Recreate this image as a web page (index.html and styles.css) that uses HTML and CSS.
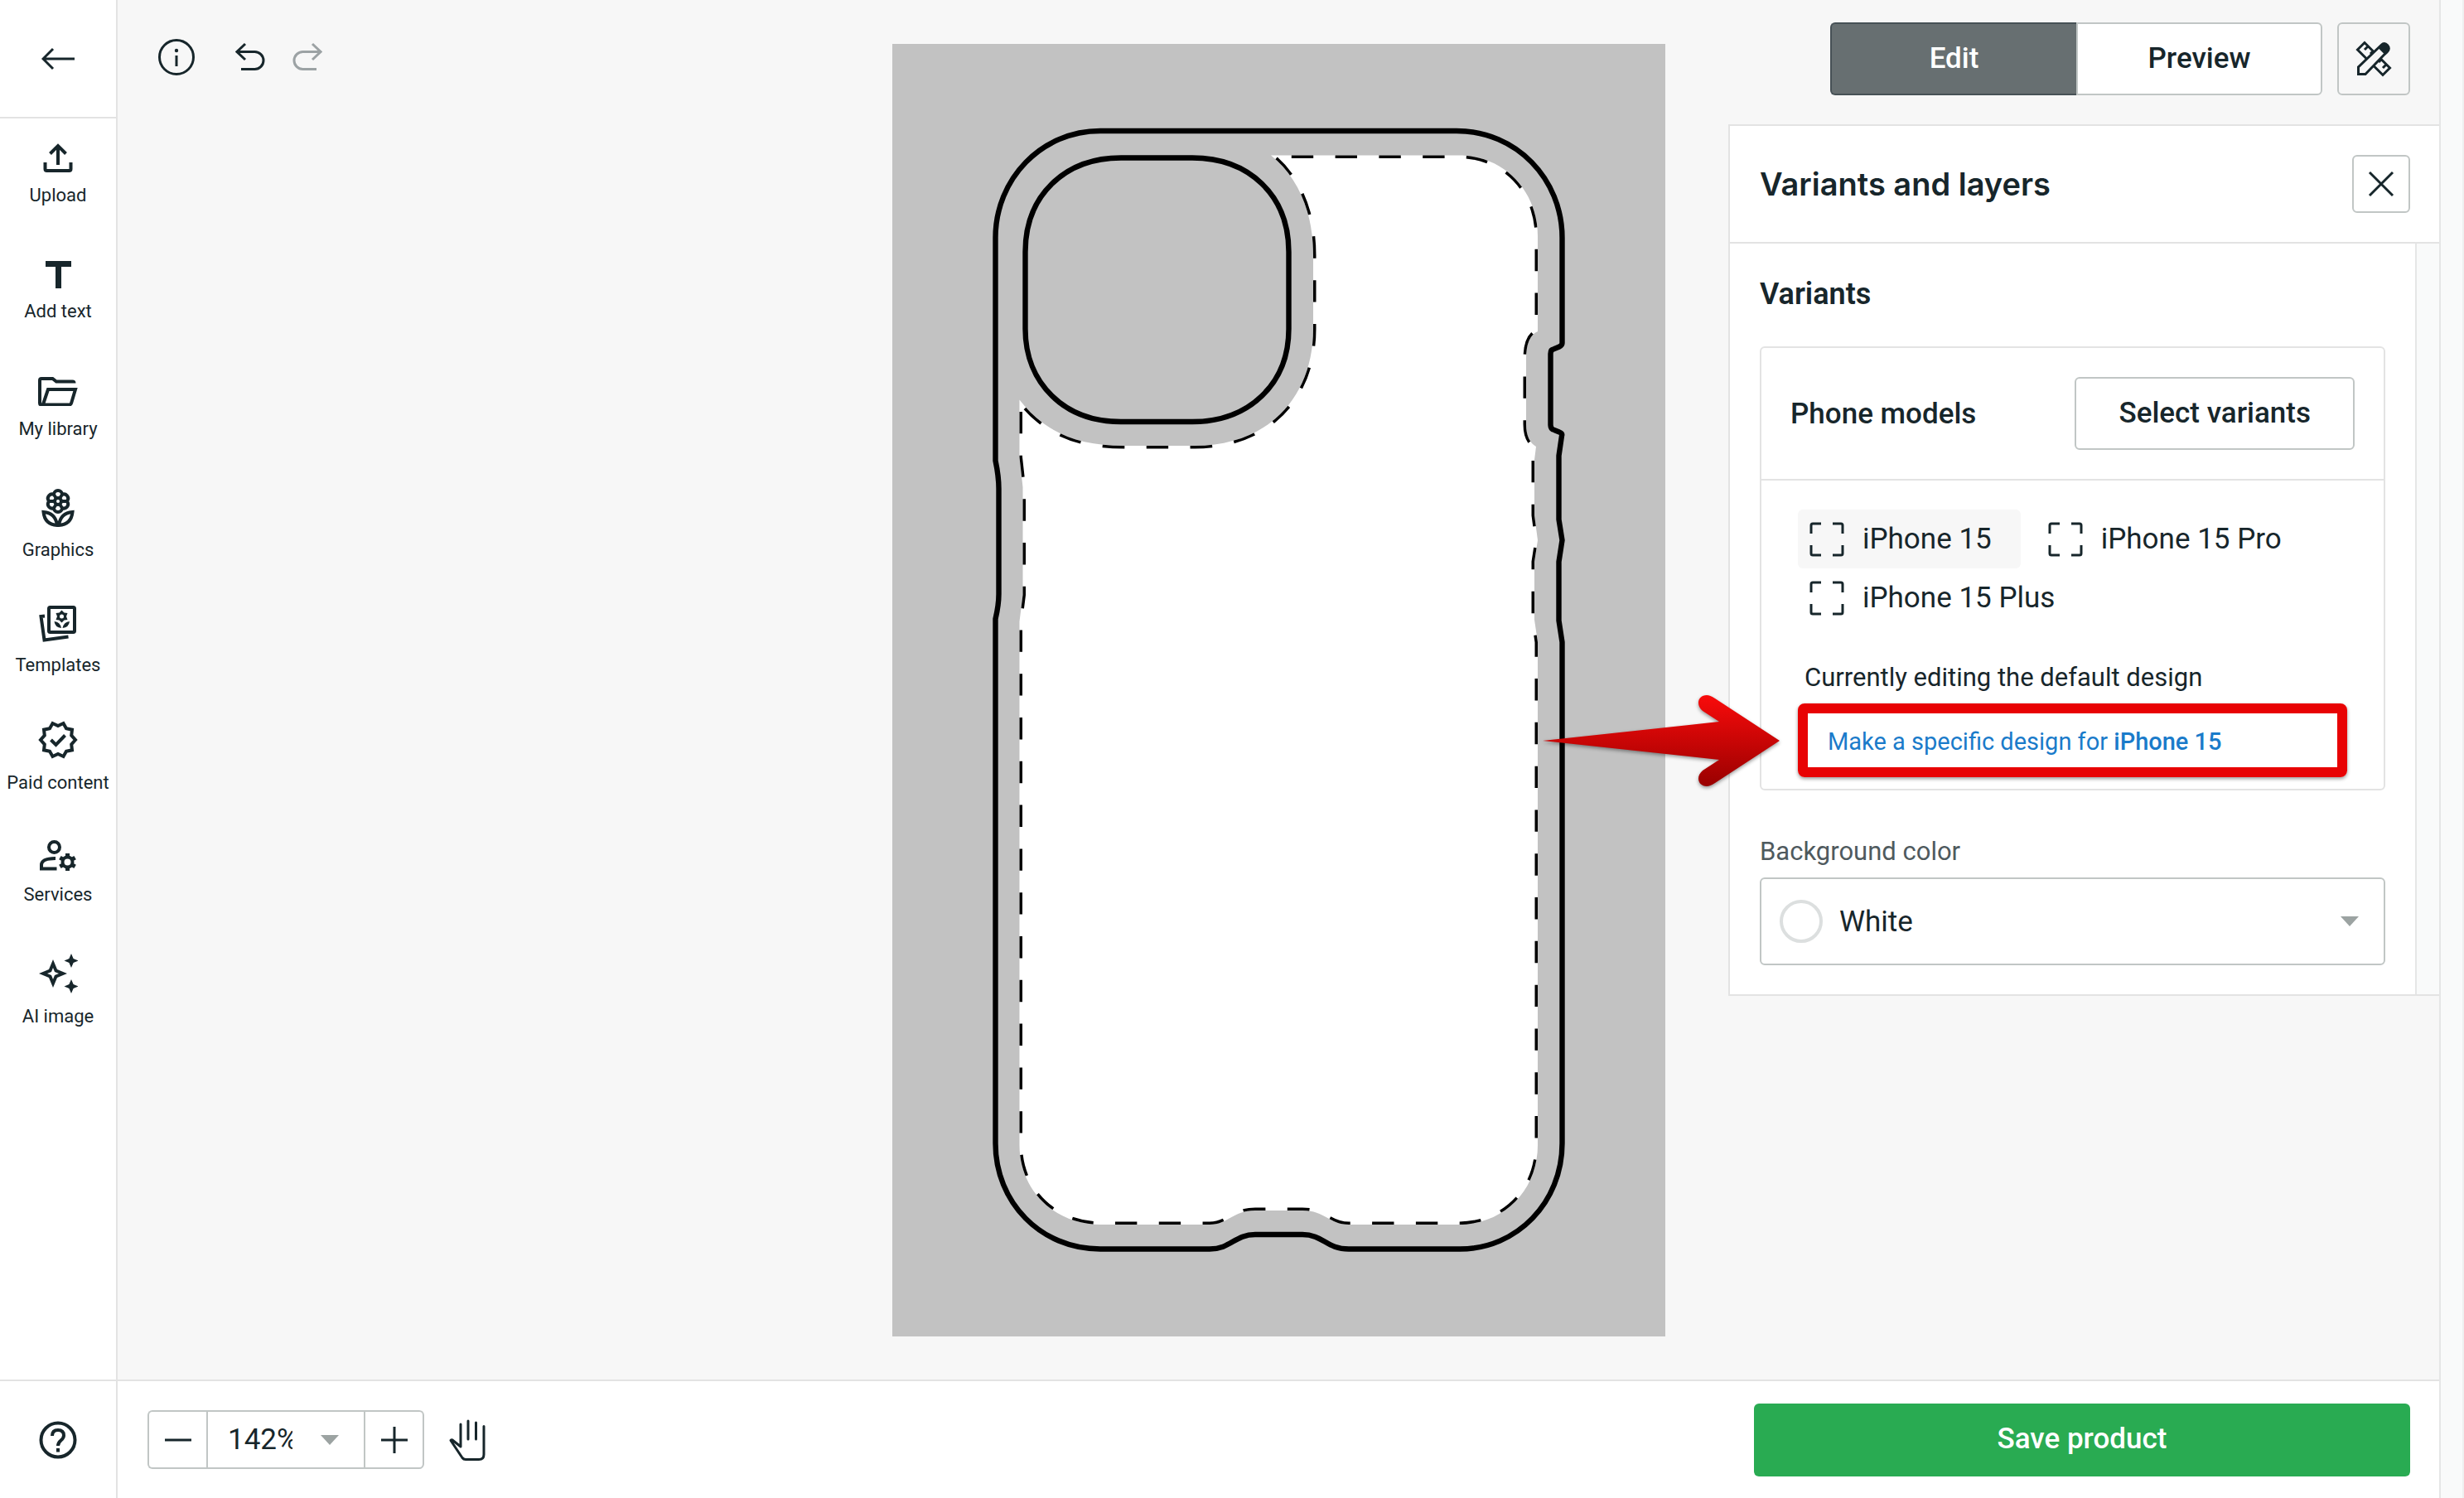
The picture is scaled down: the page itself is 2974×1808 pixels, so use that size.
FILE: index.html
```html
<!DOCTYPE html>
<html lang="en">
<head>
    <meta charset="UTF-8">
    <meta name="viewport" content="width=device-width, initial-scale=1.0">
    <title>Design editor</title>
    <link rel="stylesheet" href="styles.css">
</head>
<body>
    <aside class="sidebar">
        <button class="back" aria-label="Back">
            <svg width="40" height="28" viewBox="0 0 40 28" class="line"><path d="M14 2 2 14l12 12M2 14h38"/></svg>
        </button>
        <nav class="tools">
            <button class="tool">
                <svg width="48" height="40" viewBox="0 0 48 40" class="line thick"><path d="M24 31V8M14.500 17.500 24 8l9.500 9.500M8.500 28v8q0 2 2 2h27q2 0 2-2v-8"/></svg>
                <span>Upload</span>
            </button>
            <button class="tool">
                <svg width="48" height="46" viewBox="0 0 48 46"><path d="M9 13h31v7H28v26h-7V20H9z"/></svg>
                <span>Add text</span>
            </button>
            <button class="tool">
                <svg width="48" height="48" viewBox="0 0 48 48" class="line thick"><path d="M43.500 20.500q0-2-2-2H22l-4.500-3.500H4q-2 0-2 2v27.500q0 2 2 2h33.500q2 0 2.600-2L45 28H12L6 46"/></svg>
                <span>My library</span>
            </button>
            <button class="tool">
                <svg width="48" height="52" viewBox="0 0 48 52" class="line thick">
                    <circle cx="24" cy="21" r="4"/>
                    <path d="M19 13a5 5 0 0 1 10 0 5 5 0 0 1 6.500 7q-.8 1 0 2a5 5 0 0 1-6.500 7 5 5 0 0 1-10 0 5 5 0 0 1-6.500-7q.8-1 0-2a5 5 0 0 1 6.500-7zM19 13l3 4.500M29 13l-3 4.500M35.500 21H28M29 29l-3-4.500M19 29l3-4.500M12.500 21H20"/>
                    <path d="M6.500 34Q21 35 23 50 8 49 6.500 34zM41.500 34Q27 35 25 50 40 49 41.500 34z"/>
                </svg>
                <span>Graphics</span>
            </button>
            <button class="tool">
                <svg width="48" height="45" viewBox="0 0 48 45">
                    <path class="line thick" d="M14.500 3h28q1.500 0 1.500 1.500v27q0 1.500-1.500 1.500h-28q-1.500 0-1.500-1.500v-27Q13 3 14.500 3zM8 13.500l-4.500.5 4 28.500 29-4"/>
                    <path d="M28.500 6.500l3 3 4 .5-1.500 4 1.500 4-4 .5-3 3-3-3-4-.5 1.500-4-1.500-4 4-.5zm0 5a2.500 2.500 0 1 0 0 5 2.500 2.500 0 1 0 0-5z" fill-rule="evenodd"/>
                    <path d="M19.500 20q7 .5 8.500 8-7.500-.5-8.500-8zM38 20q-7 .5-8.500 8 7.500-.5 8.500-8z"/>
                </svg>
                <span>Templates</span>
            </button>
            <button class="tool">
                <svg width="48" height="48" viewBox="0 0 48 48" class="line thick">
                    <path d="M45 24l-4.800 5.300.8 7-7 1.500-3.500 6.200-6.500-3-6.500 3-3.500-6.200-7-1.500.8-7L3 24l4.800-5.300-.8-7 7-1.500L17.500 4 24 7l6.500-3 3.500 6.200 7 1.500-.8 7zM15.500 24l6 6 11-11.500"/>
                </svg>
                <span>Paid content</span>
            </button>
            <button class="tool">
                <svg width="48" height="41" viewBox="0 0 48 41" class="line thick">
                    <circle cx="19.500" cy="11.500" r="6.500"/>
                    <path d="M21 25Q4 25 4 33v4.500h18.500"/>
                    <circle cx="35.500" cy="29.500" r="6"/>
                    <path class="cog" d="M35.500 19v4M35.500 36v4M26.400 24.200l3.500 2M41.100 32.800l3.500 2M44.600 24.200l-3.500 2M29.900 32.800l-3.500 2"/>
                </svg>
                <span>Services</span>
            </button>
            <button class="tool">
                <svg width="48" height="53" viewBox="0 0 48 53">
                    <path d="M18 12l5 12 12 5-12 5-5 12-5-12-12-5 12-5zm0 10l-2 5-5 2 5 2 2 5 2-5 5-2-5-2z" fill-rule="evenodd"/>
                    <path d="M40 5l2.600 6 5.900 2.500-5.900 2.600L40 22l-2.600-5.900-5.900-2.600 5.900-2.500zM40 36l2.600 6 5.900 2.500-5.900 2.600L40 53l-2.600-5.900-5.900-2.600 5.900-2.500z"/>
                </svg>
                <span>AI image</span>
            </button>
        </nav>
        <button class="help" aria-label="Help">
            <svg width="46" height="46" viewBox="0 0 46 46" class="line thick"><circle cx="23" cy="23" r="20.500"/><path d="M16 18q0-7 7-7t7 6.500q0 3-3.500 6T23 30M23 33v4.500"/></svg>
        </button>
    </aside>

    <main class="editor">
        <div class="stage">
            <div class="history">
                <button aria-label="Product information">
                    <svg width="44" height="44" viewBox="0 0 44 44" class="line"><circle cx="22" cy="22" r="20.500"/><path d="M22 20v13"/><circle class="dot" cx="22" cy="14" r="2.200"/></svg>
                </button>
                <button aria-label="Undo">
                    <svg width="36" height="36" viewBox="0 0 36 36" class="line"><path d="M12 2 2 11.500 12 21M2 11.500h21.500a10.500 10.500 0 0 1 0 21H7"/></svg>
                </button>
                <button aria-label="Redo" disabled>
                    <svg width="36" height="36" viewBox="0 0 36 36" class="line"><path d="M24 2l10 9.500L24 21M34 11.500H12.500a10.500 10.500 0 0 0 0 21H29"/></svg>
                </button>
            </div>

            <svg class="canvas" viewBox="1077 53 933 1560" role="img" aria-label="Phone case template">
                <defs>
                    <path id="print-area" d="M1534 187.500H1760C1816 187.500 1856 231 1856 285V400Q1842 406 1842 433V512Q1842 532 1854 539L1852 555V622L1856 652 1852 678V748L1856 775V1382C1856 1436 1816 1478 1760 1478H1628C1604 1478 1600 1461 1572 1461H1515C1487 1461 1483 1478 1460 1478H1329C1272 1478 1230.500 1436 1230.500 1382V750L1234.500 718V588L1230.500 552V482.500C1260 521 1300 538 1356 538H1442C1530 538 1585 480 1585 397V308C1585 255 1566 213 1534 187.500Z"/>
                    <clipPath id="inside"><use href="#print-area"/></clipPath>
                </defs>
                <rect x="1077" y="53" width="933" height="1560" fill="#c2c2c2"/>
                <use href="#print-area" fill="#fff"/>
                <use href="#print-area" class="safe-line" clip-path="url(#inside)"/>
                <path class="case" d="M1328 158H1758C1830 158 1885.500 216 1885.500 287V414Q1885.500 417 1882 418.500L1875 421.500Q1871.500 422 1871.500 427V513Q1871.500 518 1876 519L1882 521.500Q1886 523 1885 526L1881.500 550V627L1885.500 652 1881.500 678V749L1885.500 775V1380C1885.500 1451 1831 1507.500 1762 1507.500H1628C1601 1507.500 1597 1490 1572 1490H1515C1490 1490 1486 1507.500 1460 1507.500H1328C1256 1507.500 1201.500 1451 1201.500 1380V747Q1205.500 730 1205.500 717V590Q1205.500 575 1201.500 556V287C1201.500 216 1257 158 1328 158Z"/>
                <path class="case" d="M1353 190.500H1439C1508 190.500 1555.500 236 1555.500 304V397C1555.500 463 1508 509 1439 509H1353C1285 509 1237.500 463 1237.500 397V304C1237.500 236 1285 190.500 1353 190.500Z"/>
            </svg>

            <div class="side">
                <div class="modes">
                    <div class="switch">
                        <button class="active">Edit</button>
                        <button>Preview</button>
                    </div>
                    <button class="square" aria-label="Design tools">
                        <svg width="44" height="44" viewBox="0 0 44 44" class="line">
                            <path d="M11 2.500 2.500 11 33 41.500 41.500 33zM15 7l-4 4M21 13l-3 3M31 23l-3 3M37 29l-4 4"/>
                            <path class="pencil" d="M31 5.500q4-4 7.500 0t0 7.500L12 40.500H3.500V32z"/>
                            <path class="tip" d="M30 6q5-4.500 9 0t0 9l-3 2.500-8.500-8.500z"/>
                        </svg>
                    </button>
                </div>

                <section class="panel">
                    <header class="panel-header">
                        <h1>Variants and layers</h1>
                        <button class="close" aria-label="Close">
                            <svg width="32" height="32" viewBox="0 0 32 32" class="line"><path d="M2 2l28 28M30 2 2 30"/></svg>
                        </button>
                    </header>
                    <div class="panel-scroll">
                        <div class="panel-body">
                            <h2>Variants</h2>
                            <div class="card">
                                <div class="card-header">
                                    <h3>Phone models</h3>
                                    <button class="outline">Select variants</button>
                                </div>
                                <div class="card-body">
                                    <div class="models">
                                        <button class="model selected">
                                            <svg width="42" height="42" viewBox="0 0 42 42" class="line"><path d="M2 14V4q0-2 2-2h10M28 2h10q2 0 2 2v10M40 28v10q0 2-2 2H28M14 40H4q-2 0-2-2V28"/></svg>
                                            iPhone 15
                                        </button>
                                        <button class="model">
                                            <svg width="42" height="42" viewBox="0 0 42 42" class="line"><path d="M2 14V4q0-2 2-2h10M28 2h10q2 0 2 2v10M40 28v10q0 2-2 2H28M14 40H4q-2 0-2-2V28"/></svg>
                                            iPhone 15 Pro
                                        </button>
                                        <button class="model">
                                            <svg width="42" height="42" viewBox="0 0 42 42" class="line"><path d="M2 14V4q0-2 2-2h10M28 2h10q2 0 2 2v10M40 28v10q0 2-2 2H28M14 40H4q-2 0-2-2V28"/></svg>
                                            iPhone 15 Plus
                                        </button>
                                    </div>
                                    <p class="status">Currently editing the default design</p>
                                    <div class="highlight">
                                        <a href="#">Make a specific design for <strong>iPhone 15</strong></a>
                                        <svg class="pointer" width="286" height="112" viewBox="0 0 286 112">
                                            <defs>
                                                <linearGradient id="red" x1="0" y1="0" x2="0" y2="1">
                                                    <stop offset="0" stop-color="#f90b0b"/>
                                                    <stop offset="1" stop-color="#990000"/>
                                                </linearGradient>
                                            </defs>
                                            <path fill="url(#red)" d="M0 56 213 33 193 20C184 12 188 1 198 1Q202 1 208 5L286 56 208 107Q202 111 198 111C188 111 184 100 193 92L213 79Z"/>
                                        </svg>
                                    </div>
                                </div>
                            </div>
                            <label class="field-label" for="bg-color">Background color</label>
                            <div class="color-field">
                                <select id="bg-color">
                                    <option>White</option>
                                    <option>Black</option>
                                </select>
                                <span class="swatch"></span>
                                <svg class="caret" width="22" height="12" viewBox="0 0 22 12"><path d="M0 0h22L11 12z"/></svg>
                            </div>
                        </div>
                        <div class="panel-track"></div>
                    </div>
                </section>
            </div>
        </div>

        <footer class="bottom-bar">
            <div class="zoom">
                <button aria-label="Zoom out"><svg width="32" height="32" viewBox="0 0 32 32" class="line"><path d="M0 16h32"/></svg></button>
                <div class="zoom-level">
                    <select aria-label="Zoom level">
                        <option>142%</option>
                        <option>100%</option>
                    </select>
                    <svg class="caret" width="22" height="12" viewBox="0 0 22 12"><path d="M0 0h22L11 12z"/></svg>
                </div>
                <button aria-label="Zoom in"><svg width="32" height="32" viewBox="0 0 32 32" class="line"><path d="M0 16h32M16 0v32"/></svg></button>
            </div>
            <button class="hand" aria-label="Pan">
                <svg width="44" height="50" viewBox="0 0 44 50" class="line round"><path d="M14 6v27L4 25q-1.500-.5-2 .5l14 21q1.500 2 4 2h16q6 0 6-6V8.500M23 2v22M32.500 4v20"/></svg>
            </button>
            <button class="save">Save product</button>
        </footer>
    </main>
    <div class="page-track"></div>
</body>
</html>
```
FILE: styles.css
```css
* {
    box-sizing: border-box;
}

body {
    margin: 0;
    display: flex;
    min-height: 100vh;
    font-family: Roboto, Arial, sans-serif;
    font-size: 35px;
    color: #17262b;
    background-color: #f7f7f7;
}

h1, h2, h3, p {
    margin: 0;
}

button, select {
    font: inherit;
    color: inherit;
    border: none;
    background: none;
    padding: 0;
    margin: 0;
}

svg {
    display: block;
    fill: #17262b;
}

.line {
    fill: none;
    stroke: #17262b;
    stroke-width: 3;
}

.thick {
    stroke-width: 4;
}

.round {
    stroke-linecap: round;
    stroke-linejoin: round;
}

/* Sidebar */
.sidebar {
    flex: none;
    width: 142px;
    display: flex;
    flex-direction: column;
    background-color: #fff;
    border-right: 2px solid #e3e3e3;
}

.back, .help {
    height: 143px;
    display: flex;
    align-items: center;
    justify-content: center;
}

.back {
    border-bottom: 2px solid #e3e3e3;
}

.help {
    border-top: 2px solid #e3e3e3;
}

.tools {
    flex: 1;
    display: flex;
    flex-direction: column;
    gap: 52px;
    padding-top: 25px;
}

.tool {
    display: flex;
    flex-direction: column;
    align-items: center;
    gap: 14px;
    font-size: 22px;
    line-height: 28px;
    white-space: nowrap;
}

.cog {
    stroke-width: 5;
}

/* Editor */
.editor {
    flex: 1;
    min-width: 0;
    display: flex;
    flex-direction: column;
}

.stage {
    flex: 1;
    display: grid;
    grid-template-columns: 1fr auto 1fr;
}

.history {
    display: flex;
    align-items: center;
    align-self: start;
    gap: 33px;
    padding: 47px 0 0 49px;
}

.history button:first-child {
    margin-right: 16px;
}

.history button:disabled {
    opacity: 0.4;
}

.dot {
    fill: #17262b;
    stroke: none;
}

.canvas {
    align-self: center;
    height: calc(100vh - 248px);
}

.case {
    fill: none;
    stroke: #000;
    stroke-width: 6.4;
}

.safe-line {
    fill: none;
    stroke: #000;
    stroke-width: 7;
    stroke-dasharray: 26.4;
    stroke-dashoffset: 28;
}

.side {
    display: flex;
    flex-direction: column;
    align-items: flex-end;
    gap: 35px;
    padding-top: 27px;
}

.modes {
    display: flex;
    gap: 18px;
    margin-right: 35px;
}

.switch {
    display: flex;
}

.switch button {
    width: 297px;
    height: 88px;
    padding-bottom: 2px;
    font-weight: 500;
    background-color: #fff;
    border: 2px solid #c1c6c5;
    border-radius: 0 6px 6px 0;
}

.switch .active {
    color: #fff;
    background-color: #676f71;
    border-color: #475156;
    border-right: none;
    border-radius: 6px 0 0 6px;
}

.square, .close {
    display: flex;
    align-items: center;
    justify-content: center;
    border: 2px solid #c1c6c5;
    border-radius: 6px;
}

.square {
    width: 88px;
    height: 88px;
}

.pencil {
    fill: #f7f7f7;
}

.tip {
    fill: #17262b;
    stroke: none;
}

/* Variants panel */
.panel {
    width: 858px;
    background-color: #fff;
    border: 2px solid #e3e3e3;
    border-right: none;
}

.panel-header {
    display: flex;
    align-items: center;
    justify-content: space-between;
    height: 142px;
    padding: 0 35px 0 36px;
    border-bottom: 2px solid #e3e3e3;
}

.panel-header h1 {
    font-family: Inter, Roboto, sans-serif;
    font-size: 38px;
    font-weight: 600;
}

.close {
    width: 70px;
    height: 70px;
}

.panel-scroll {
    display: flex;
}

.panel-body {
    flex: 1;
    padding: 39px 36px 35px;
}

.panel-track {
    width: 29px;
    background-color: #f9fafa;
    border-left: 2px solid #e5e6e6;
}

.panel-body h2 {
    font-size: 36px;
    line-height: 44px;
    font-weight: 600;
    margin-bottom: 41px;
}

.card {
    border: 2px solid #e3e3e3;
    border-radius: 6px;
}

.card-header {
    display: flex;
    align-items: center;
    justify-content: space-between;
    padding: 35px;
    border-bottom: 2px solid #e3e3e3;
}

.card-header h3 {
    font-size: 35px;
    font-weight: 500;
}

.outline {
    height: 88px;
    padding: 0 51px 2px;
    font-weight: 500;
    border: 2px solid #c1c6c5;
    border-radius: 6px;
}

.card-body {
    padding: 35px 44px 14px;
}

.models {
    display: flex;
    flex-wrap: wrap;
    column-gap: 19px;
    margin-bottom: 39px;
}

.model {
    display: flex;
    align-items: center;
    gap: 22px;
    height: 71px;
    padding: 0 35px 0 14px;
    border-radius: 6px;
}

.selected {
    background-color: #f7f7f7;
}

.status {
    font-size: 31px;
    line-height: 44px;
    padding-left: 8px;
    margin-bottom: 9px;
}

/* Highlighted link with its arrow */
.highlight {
    position: relative;
    display: flex;
    align-items: center;
    height: 89px;
    padding: 2px 0 0 24px;
    border: 12px solid #e80304;
    border-radius: 8px;
    box-shadow: 0 2px 4px rgba(0, 0, 0, 0.4);
}

.highlight a {
    font-size: 29px;
    color: #1a7bca;
    text-decoration: none;
}

.highlight strong {
    font-weight: 500;
}

.pointer {
    position: absolute;
    top: 50%;
    right: calc(100% + 34px);
    transform: translateY(-50%);
    filter: drop-shadow(0 2px 2px rgba(0, 0, 0, 0.4));
}

.field-label {
    display: block;
    margin: 54px 0 11px;
    font-size: 31px;
    line-height: 40px;
    color: #4f5a5e;
}

.color-field, .zoom-level {
    position: relative;
}

.color-field select, .zoom-level select {
    appearance: none;
    width: 100%;
    background-color: #fff;
    border: 2px solid #c1c6c5;
}

.color-field select {
    height: 106px;
    padding: 0 94px;
    border-radius: 6px;
}

.swatch {
    position: absolute;
    top: 27px;
    left: 24px;
    width: 52px;
    height: 52px;
    border: 4px solid #dcdfdf;
    border-radius: 50%;
    pointer-events: none;
}

.caret {
    position: absolute;
    top: calc(50% - 6px);
    right: 32px;
    fill: #9ca3a2;
    pointer-events: none;
}

/* Bottom bar */
.bottom-bar {
    display: flex;
    align-items: center;
    height: 143px;
    padding: 0 35px 0 36px;
    background-color: #fff;
    border-top: 2px solid #e3e3e3;
}

.zoom {
    display: flex;
}

.zoom button {
    display: flex;
    align-items: center;
    justify-content: center;
    width: 71px;
    height: 71px;
    border: 2px solid #c1c6c5;
    border-right: none;
    border-radius: 6px 0 0 6px;
}

.zoom button:last-child {
    border-right: 2px solid #c1c6c5;
    border-left: none;
    border-radius: 0 6px 6px 0;
}

.zoom-level {
    width: 192px;
}

.zoom-level select {
    height: 71px;
    padding: 0 86px 0 24px;
    border-radius: 0;
}

.hand {
    margin-left: 30px;
}

.save {
    width: 792px;
    height: 88px;
    margin-left: auto;
    padding-bottom: 2px;
    font-weight: 500;
    color: #fff;
    background-color: #29ab52;
    border-radius: 6px;
}

.page-track {
    flex: none;
    width: 30px;
    background-color: #f9fafa;
    border-left: 2px solid #e5e6e6;
    border-right: 2px solid #efefef;
}
```
